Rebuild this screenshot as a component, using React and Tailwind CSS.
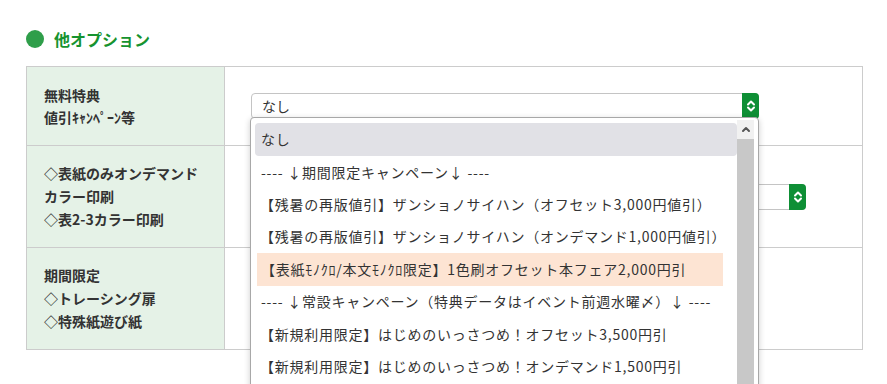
import { useState } from "react"

const options = [
  { label: "なし", kind: "selected" },
  { label: "---- ↓期間限定キャンペーン↓ ----", kind: "sep" },
  { label: "【残暑の再版値引】ザンショノサイハン（オフセット3,000円値引）" },
  { label: "【残暑の再版値引】ザンショノサイハン（オンデマンド1,000円値引）" },
  { label: "【表紙ﾓﾉｸﾛ/本文ﾓﾉｸﾛ限定】1色刷オフセット本フェア2,000円引", kind: "hot" },
  { label: "---- ↓常設キャンペーン（特典データはイベント前週水曜〆）↓ ----", kind: "sep" },
  { label: "【新規利用限定】はじめのいっさつめ！オフセット3,500円引" },
  { label: "【新規利用限定】はじめのいっさつめ！オンデマンド1,500円引" },
]

function Arrows() {
  return (
    <svg width="10" height="14" viewBox="0 0 10 14" fill="none" stroke="white" strokeWidth="2" strokeLinecap="round" strokeLinejoin="round">
      <path d="M2 5.5 L5 2.5 L8 5.5" />
      <path d="M2 8.5 L5 11.5 L8 8.5" />
    </svg>
  )
}

function SelectBox({ value, width, children }) {
  return (
    <div className="relative" style={{ width }}>
      <div className="h-[26px] flex items-center border border-[#c4c4c4] rounded-[4px] bg-white pl-[10px] text-[14px] text-[#333]">
        {value}
      </div>
      <div className="absolute right-0 top-0 h-[26px] w-[17px] bg-[#0e8f35] rounded-r-[4px] flex items-center justify-center">
        <Arrows />
      </div>
      {children}
    </div>
  )
}

function Dropdown() {
  return (
    <div className="absolute left-[-1px] top-[24px] w-[509px] h-[280px] bg-white border border-[#a8a8a8] rounded-t-[4px] shadow-[0_2px_6px_rgba(0,0,0,0.2)] flex z-10">
      <div className="flex-1 pl-[4px] pt-[5px]">
        {options.map((o, i) => (
          <div
            key={i}
            className={
              "flex items-center whitespace-nowrap text-[14px] tracking-[0.75px] text-[#333] " +
              (o.kind === "selected"
                ? "bg-[#e1e1e6] rounded-[4px] pl-[6px] h-[33px]"
                : o.kind === "hot"
                ? "h-[32.4px] bg-[#fde4d3] pl-[4px] mr-[14px] ml-[2px]"
                : o.kind === "sep"
                ? "h-[32.4px] pl-[6px]"
                : "h-[32.4px] pl-[5px]")
            }
          >
            {o.label}
          </div>
        ))}
      </div>
      <div className="w-[17px] mr-[4px] mt-[2px] flex flex-col">
        <div className="h-[19px] bg-[#f1f1f1] flex items-center justify-center">
          <svg width="10" height="7" viewBox="0 0 10 7" fill="none" stroke="#555" strokeWidth="2" strokeLinecap="round" strokeLinejoin="round">
            <path d="M2 5 L5 2 L8 5" />
          </svg>
        </div>
        <div className="flex-1 bg-[#c8c8c8]" />
      </div>
    </div>
  )
}

export default function App() {
  const [value] = useState("なし")

  return (
    <div className="w-[887px] h-[384px] overflow-hidden bg-white pl-[26px] pt-[30px]" style={{ fontFamily: '"Noto Sans CJK JP", "Noto Sans", sans-serif' }}>
      <div className="flex items-center gap-[10px] h-[18px]">
        <div className="w-[18px] h-[18px] rounded-full bg-[#2f9e4a]" />
        <h2 className="text-[16px] font-bold text-[#16932f] leading-none">他オプション</h2>
      </div>

      <div className="mt-[18px] w-[837px] border border-[#cccccc] border-b-0">
        <div className="flex h-[79px] border-b border-[#cccccc]">
          <div className="w-[198px] bg-[#e5f2e7] border-r border-[#cccccc] pl-[17px] flex flex-col justify-center text-[14px] font-bold text-[#333] leading-[22px]">
            <div>無料特典</div>
            <div>値引ｷｬﾝﾍﾟｰﾝ等</div>
          </div>
          <div className="flex-1 pl-[26px] flex items-center">
            <SelectBox value={value} width={508}>
              <Dropdown />
            </SelectBox>
          </div>
        </div>

        <div className="flex h-[102px] border-b border-[#cccccc]">
          <div className="w-[198px] bg-[#e5f2e7] border-r border-[#cccccc] pl-[17px] flex flex-col justify-center text-[14px] font-bold text-[#333] leading-[23px]">
            <div>◇表紙のみオンデマンド</div>
            <div>カラー印刷</div>
            <div>◇表2-3カラー印刷</div>
          </div>
          <div className="flex-1 pl-[26px] flex items-center">
            <SelectBox value="なし" width={555} />
          </div>
        </div>

        <div className="flex h-[102px] border-b border-[#cccccc]">
          <div className="w-[198px] bg-[#e5f2e7] border-r border-[#cccccc] pl-[17px] flex flex-col justify-center text-[14px] font-bold text-[#333] leading-[23px]">
            <div>期間限定</div>
            <div>◇トレーシング扉</div>
            <div>◇特殊紙遊び紙</div>
          </div>
          <div className="flex-1" />
        </div>
      </div>
    </div>
  )
}
